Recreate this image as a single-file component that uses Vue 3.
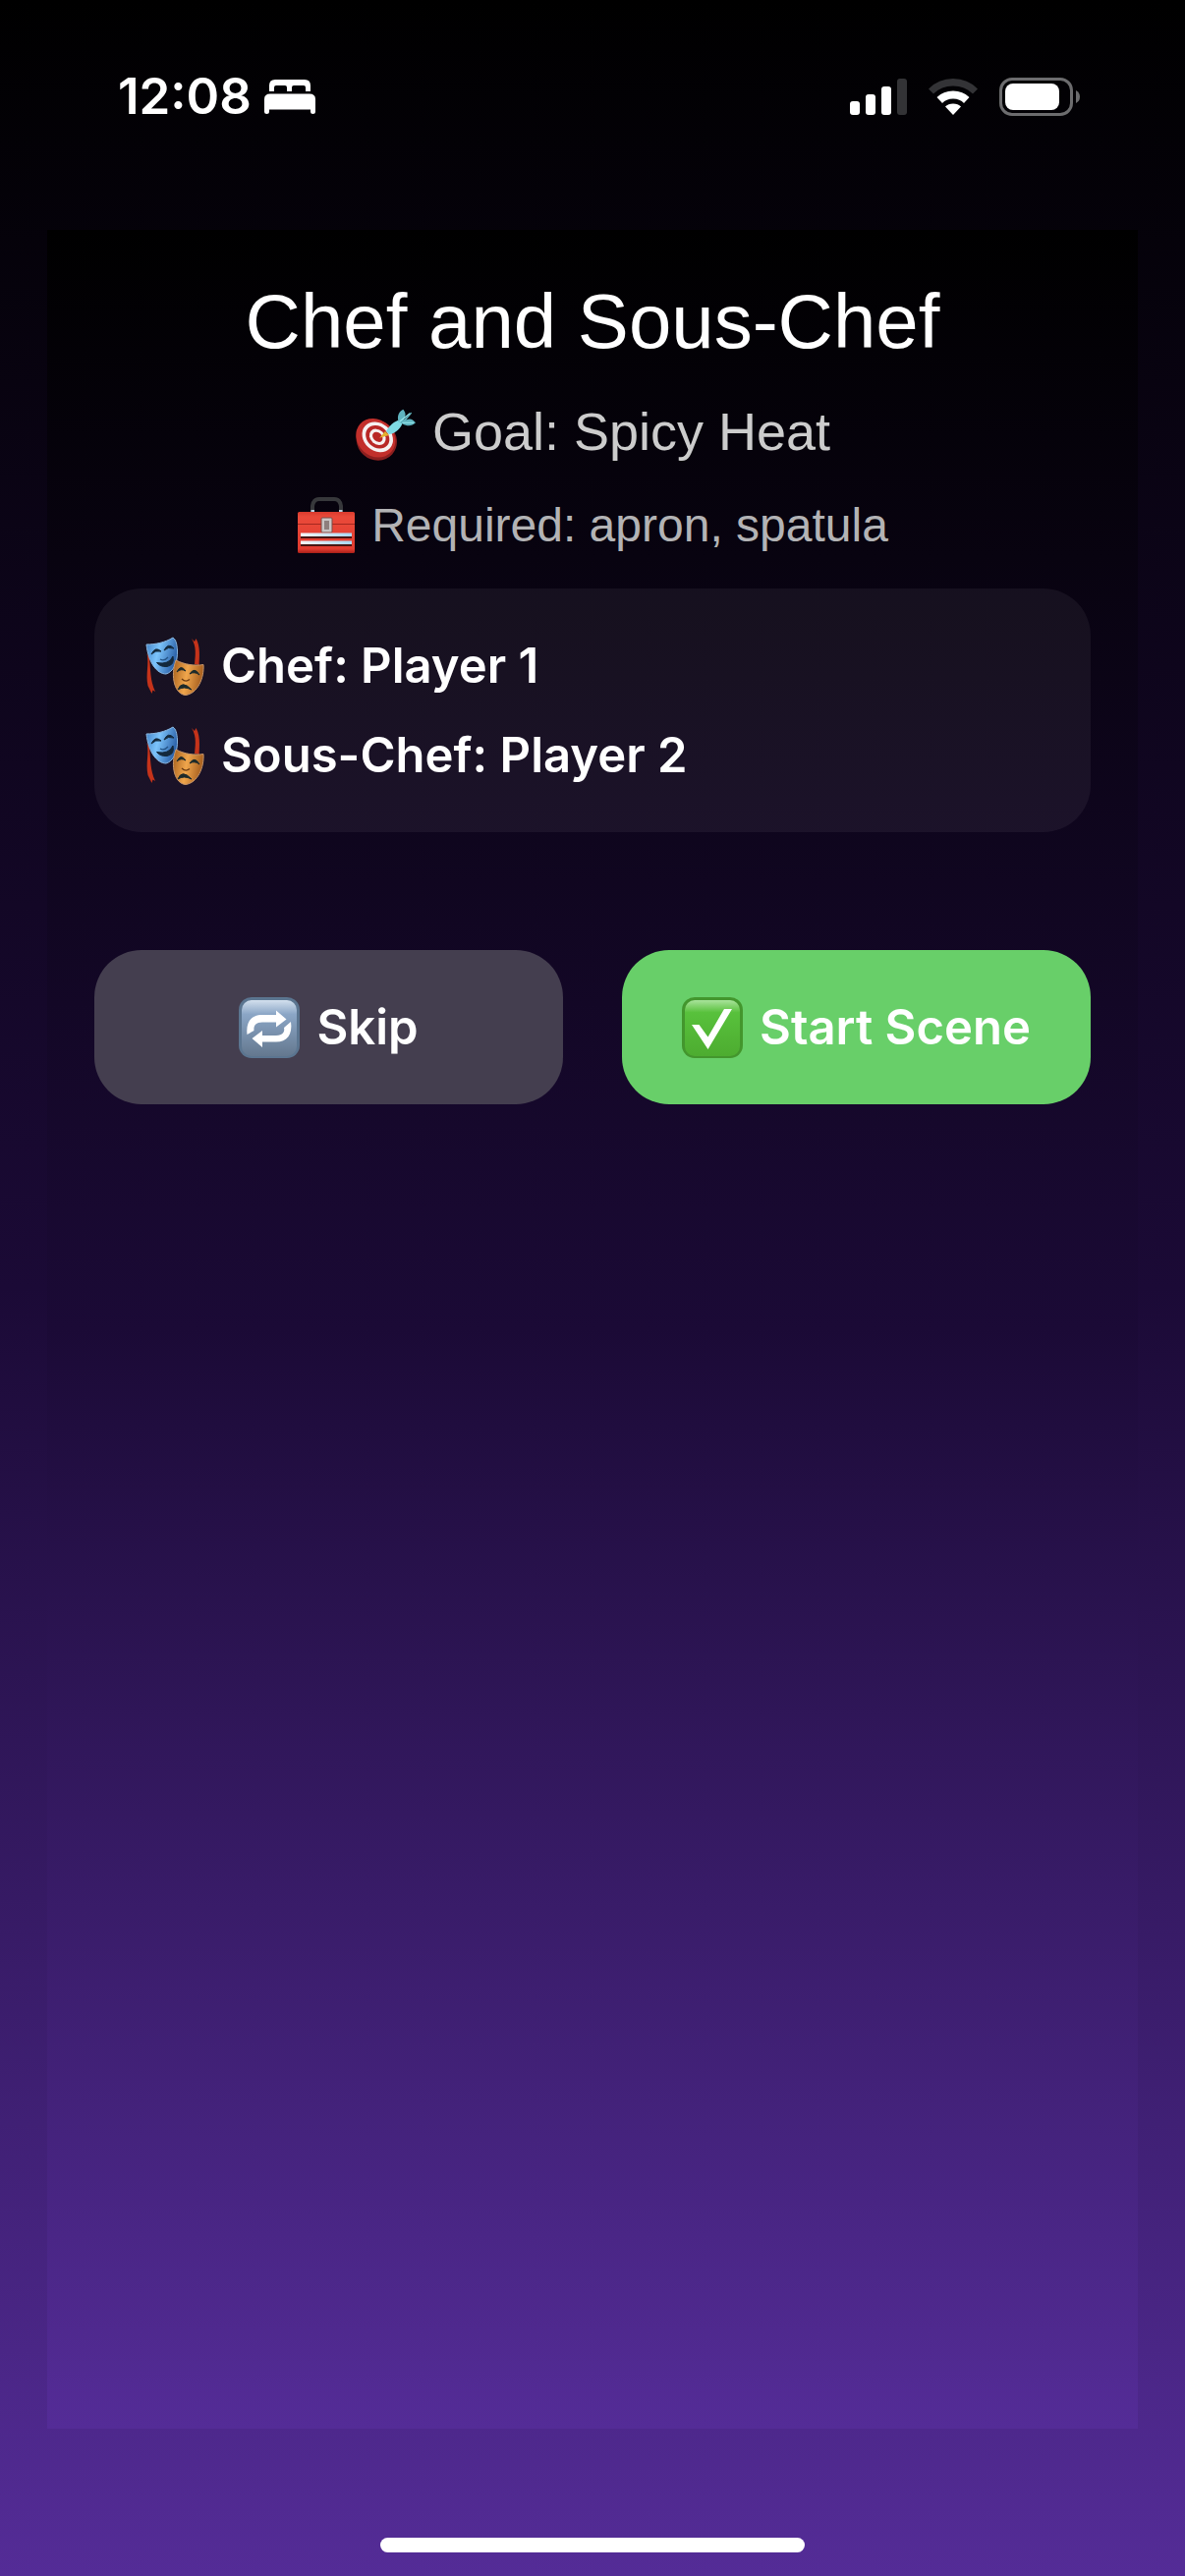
<script setup>
const roles = [
  { role: 'Chef', player: 'Player 1' },
  { role: 'Sous-Chef', player: 'Player 2' },
]
</script>

<template>
  <div class="screen">
    <svg class="defs" aria-hidden="true">
      <defs>
        <linearGradient id="blueMask" x1="0" y1="0" x2="1" y2="0.3">
          <stop offset="0" stop-color="#3f7fc4" />
          <stop offset="0.45" stop-color="#7cc4fb" />
          <stop offset="1" stop-color="#2f66ad" />
        </linearGradient>
        <linearGradient id="goldMask" x1="0" y1="0" x2="1" y2="0.2">
          <stop offset="0" stop-color="#a65f1c" />
          <stop offset="0.5" stop-color="#f0a64c" />
          <stop offset="1" stop-color="#a8601f" />
        </linearGradient>
        <linearGradient id="slate" x1="0" y1="0" x2="0" y2="1">
          <stop offset="0" stop-color="#d3e0ee" />
          <stop offset="0.25" stop-color="#8ba6c6" />
          <stop offset="1" stop-color="#64788f" />
        </linearGradient>
        <linearGradient id="leaf" x1="0" y1="0" x2="0" y2="1">
          <stop offset="0" stop-color="#a9e39b" />
          <stop offset="0.22" stop-color="#58c13c" />
          <stop offset="1" stop-color="#4dac30" />
        </linearGradient>
        <linearGradient id="chrome" x1="0" y1="0" x2="1" y2="0">
          <stop offset="0" stop-color="#f4f6f8" />
          <stop offset="1" stop-color="#a9d8f4" />
        </linearGradient>
        <linearGradient id="redBox" x1="0" y1="0" x2="0" y2="1">
          <stop offset="0" stop-color="#d83a2d" />
          <stop offset="0.12" stop-color="#ea4a3a" />
          <stop offset="0.9" stop-color="#e23c30" />
          <stop offset="1" stop-color="#a81f18" />
        </linearGradient>
        <symbol id="masks" viewBox="0 0 60 60">
          <path d="M1.5 17 4 22C5.500 34 4.500 44 10 56L7.500 54.500 6.500 58 2.500 50C0 38 4 28 1.500 17Z" fill="#c5331a" />
          <path d="M47 2 50 5 51.500 2C56 10 55 20 54.500 29L50 28C51 18 52 10 47 2Z" fill="#c5331a" />
          <path d="M1 8C10 8 20 6 28 1 31 3 32 7 32.500 14 33 27 28 36 21 38 12 38 3 27 1 8Z" fill="url(#blueMask)" stroke="#8cb9e2" stroke-width="1" />
          <path d="M6 18Q10 9.500 16 15Q10 13.500 6 18ZM19 14Q23 5.500 29 12Q23 10 19 14ZM11.500 26.500Q24 29 28 20Q30 29 22 30.500Q15 31 11.500 26.500Z" fill="#13293c" stroke="#13293c" stroke-width="1" />
          <path d="M15 23Q19 25.500 23 21" fill="none" stroke="#235487" stroke-width="1.300" />
          <path d="M31 24C40 28.500 50 30 59 28.500 60 42 53 58 41 59.500 30 59 25 41 31 24Z" fill="url(#goldMask)" stroke="#c7966a" stroke-width="1" />
          <path d="M32 36Q36 27.500 41 35Q36 32 32 36ZM45 38Q50 30 55 39Q50 35 45 38ZM33 54Q37 43.500 47 54Q39 50 33 54Z" fill="#1d2a2a" stroke="#1d2a2a" stroke-width="1" />
          <path d="M37 43Q41 47 45 43.500" fill="none" stroke="#6b3b12" stroke-width="1.300" />
        </symbol>
      </defs>
    </svg>

    <header class="status">
      <div class="status-left">
        <span class="time">12:08</span>
        <svg class="bed" viewBox="0 0 52 35" aria-label="Sleep focus" role="img">
          <path d="M5 12V6Q5 0 11 0H41Q47 0 47 6V12H42V8Q42 6 40 6H30Q28 6 28 8V12H23V8Q23 6 21 6H12Q10 6 10 8V12Z" fill="#fff" />
          <path d="M0 20Q0 14.500 6 14.500H46Q52 14.500 52 20V33Q52 35 49.500 35 47 35 47 33V30.500H5V33Q5 35 2.500 35 0 35 0 33Z" fill="#fff" />
        </svg>
      </div>
      <div class="status-right">
        <svg class="signal" viewBox="0 0 58 37" aria-label="Signal" role="img">
          <rect x="0" y="23" width="10" height="14" rx="3" fill="#fff" />
          <rect x="16" y="16" width="10" height="21" rx="3" fill="#fff" />
          <rect x="32" y="8" width="10" height="29" rx="3" fill="#fff" />
          <rect x="48" y="0" width="10" height="37" rx="3" fill="#333336" />
        </svg>
        <svg class="wifi" viewBox="0 0 50 37" aria-label="Wi-Fi" role="img">
          <path d="M0 10.500Q10 0 25 0T50 10.500L45 15.500Q37 7.500 25 7.500T5 15.500Z" fill="#333336" />
          <path d="M8.500 19Q15 12.500 25 12.500T41.500 19L36 25Q32 20.500 25 20.500T14 25Z" fill="#fff" />
          <path d="M17 28.500Q20 25.500 25 25.500T33 28.500L25 37Z" fill="#fff" />
        </svg>
        <svg class="battery" viewBox="0 0 82 39" aria-label="Battery" role="img">
          <rect x="1.500" y="1.500" width="72" height="36" rx="11.500" fill="none" stroke="#6c6c6e" stroke-width="3" />
          <rect x="6" y="6" width="55" height="27" rx="8" fill="#fff" />
          <path d="M78 13Q82 15 82 19.500T78 26Z" fill="#6c6c6e" />
        </svg>
      </div>
    </header>

    <main class="panel">
      <h1 class="title">Chef and Sous-Chef</h1>

      <p class="line goal">
        <svg class="emoji" viewBox="0 -5 64 64" aria-hidden="true">
          <ellipse cx="23" cy="36.500" rx="22" ry="20.500" transform="rotate(42 23 36.500)" fill="#8c1f1f" />
          <ellipse cx="22" cy="34" rx="22" ry="19" transform="rotate(42 22 34)" fill="#c22f2b" />
          <ellipse cx="24" cy="33" rx="17.500" ry="14.500" transform="rotate(42 24 33)" fill="#f6f1f1" />
          <ellipse cx="24" cy="33" rx="13.500" ry="11" transform="rotate(42 24 33)" fill="#b92826" />
          <ellipse cx="24" cy="33" rx="9.500" ry="7.500" transform="rotate(42 24 33)" fill="#f6f1f1" />
          <ellipse cx="24" cy="33" rx="6" ry="4.500" transform="rotate(42 24 33)" fill="#b92826" />
          <path d="M26 34 32 27 36 31Z" fill="#e3b02c" />
          <path d="M33 27C36 21 42 16 47 15L50 19C47 26 41 30 36 30Z" fill="#7fdbe4" />
          <path d="M46 17C44 10 47 6 51 4 54 8 54 11 51 15L59 7 60 8 54 15C58 13 61 14 64 18 60 22 55 22 50 19Z" fill="#5fb3bf" />
          <path d="M47 17 58 8M50 18 62 18" stroke="#9aeaf0" stroke-width="1.200" fill="none" />
        </svg>
        <span>Goal: Spicy Heat</span>
      </p>

      <p class="line required">
        <svg class="emoji" viewBox="0 0 60 60" aria-hidden="true">
          <path d="M16 17V10Q17 3 23 3H38Q44 3 45 10V17" fill="none" stroke="#37383b" stroke-width="4" />
          <path d="M14.500 14H18V18H14.500ZM43 14H46.500V18H43Z" fill="#b7cfe0" />
          <rect x="1" y="16" width="58" height="42" rx="1.500" fill="url(#redBox)" />
          <path d="M1 28.500H59" stroke="#a5281f" stroke-width="1" />
          <rect x="25" y="22" width="11" height="15" rx="1" fill="#c9c5c4" stroke="#7c4a44" stroke-width="1" />
          <rect x="28" y="25" width="5" height="9" fill="#8d7f7d" />
          <path d="M4 38.500H56V43H4ZM4 46.500H56V51H4Z" fill="#471713" />
          <path d="M4 37.500H56V41H4ZM4 45.500H56V49H4Z" fill="url(#chrome)" />
        </svg>
        <span>Required: apron, spatula</span>
      </p>

      <ul class="roles">
        <li v-for="item in roles" :key="item.role" class="role">
          <svg class="emoji" aria-hidden="true"><use href="#masks" /></svg>
          <span>{{ item.role }}: {{ item.player }}</span>
        </li>
      </ul>

      <div class="actions">
        <button type="button" class="action skip">
          <svg class="emoji" viewBox="0 0 62 62" aria-hidden="true">
            <rect x="0" y="0" width="62" height="62" rx="13" fill="#5b7590" />
            <rect x="3" y="3" width="56" height="57" rx="10" fill="url(#slate)" />
            <path d="M8.500 38C7 25 13 18 24 18H38V13.500L48.500 22.500 38 30.500V25.500H24C17 25.500 15 29 15.500 34Z" fill="#fff" />
            <path d="M53 25C55 38 49 45.500 38 45.500H24V51L13.500 42 24 34V39H38C45 39 47 35 46 31Z" fill="#fff" />
          </svg>
          <span>Skip</span>
        </button>
        <button type="button" class="action start">
          <svg class="emoji" viewBox="0 0 62 62" aria-hidden="true">
            <rect x="0" y="0" width="62" height="62" rx="13" fill="#43962d" />
            <rect x="3" y="3" width="56" height="57" rx="10" fill="url(#leaf)" />
            <path d="M10 28H17.500L26.500 40.500 43 12H51L26.500 53Z" fill="#fff" />
          </svg>
          <span>Start Scene</span>
        </button>
      </div>
    </main>

    <footer class="bottom">
      <div class="home-indicator"></div>
    </footer>
  </div>
</template>

<style>
body {
  margin: 0;
  background: #000;
}
</style>

<style scoped>
.screen {
  box-sizing: border-box;
  min-height: 100vh;
  display: flex;
  flex-direction: column;
  background: linear-gradient(180deg, #000 0%, #1b0a36 50%, #542c97 100%);
  color: #fff;
  font-family: Inter, "Liberation Sans", sans-serif;
}

.defs {
  position: absolute;
  width: 0;
  height: 0;
}

.status {
  display: flex;
  justify-content: space-between;
  align-items: center;
  height: 60px;
  padding: 68px 107px 106px 120px;
}

.status-left,
.status-right {
  display: flex;
  align-items: center;
}

.status-left {
  gap: 13px;
}

.status-right {
  gap: 22px;
}

.time {
  font-size: 51px;
  line-height: 60px;
  font-weight: 600;
}

.bed {
  width: 52px;
  height: 35px;
}

.signal {
  width: 58px;
  height: 37px;
}

.wifi {
  width: 50px;
  height: 37px;
}

.battery {
  width: 82px;
  height: 39px;
}

.panel {
  flex: 1;
  display: flex;
  flex-direction: column;
  gap: 36px;
  margin: 0 48px;
  padding: 48px;
  background: linear-gradient(180deg, #000 0%, #1b0a36 50%, #542c97 100%);
}

.title,
.line {
  margin: 0;
  font-family: "Liberation Sans", Arial, sans-serif;
  font-weight: 400;
  text-align: center;
}

.title {
  font-size: 78px;
  line-height: 90px;
}

.line {
  display: flex;
  justify-content: center;
  align-items: center;
}

.emoji {
  flex: none;
  width: 62px;
  height: 62px;
}

.goal {
  gap: 17px;
  height: 62px;
  font-size: 54px;
  line-height: 62px;
  color: #ccc;
}

.required {
  gap: 16px;
  height: 57px;
  font-size: 48px;
  line-height: 57px;
  color: #b3b3b5;
}

.required .emoji {
  width: 60px;
  height: 60px;
}

.roles {
  display: flex;
  flex-direction: column;
  gap: 30px;
  margin: 0;
  padding: 48px;
  list-style: none;
  border-radius: 48px;
  background: rgba(255, 255, 255, 0.055);
}

.role {
  display: flex;
  align-items: center;
  gap: 17px;
  height: 61px;
  padding-left: 4px;
  font-size: 49px;
  line-height: 61px;
  font-weight: 600;
}

.role .emoji {
  width: 60px;
  height: 60px;
}

.actions {
  display: flex;
  gap: 60px;
  margin-top: 84px;
}

.action {
  flex: 1 1 0;
  display: flex;
  justify-content: center;
  align-items: center;
  gap: 17px;
  padding: 48px 0;
  border: 0;
  border-radius: 48px;
  color: #fff;
  font-family: inherit;
  font-size: 49px;
  line-height: 61px;
  font-weight: 600;
}

.action .emoji {
  margin: -1px 0;
}

.skip {
  background: #443e4f;
}

.start {
  background: #68cf69;
}

.bottom {
  display: flex;
  justify-content: center;
  padding: 111px 0 24px;
}

.home-indicator {
  width: 432px;
  height: 15px;
  border-radius: 8px;
  background: #fff;
}
</style>
